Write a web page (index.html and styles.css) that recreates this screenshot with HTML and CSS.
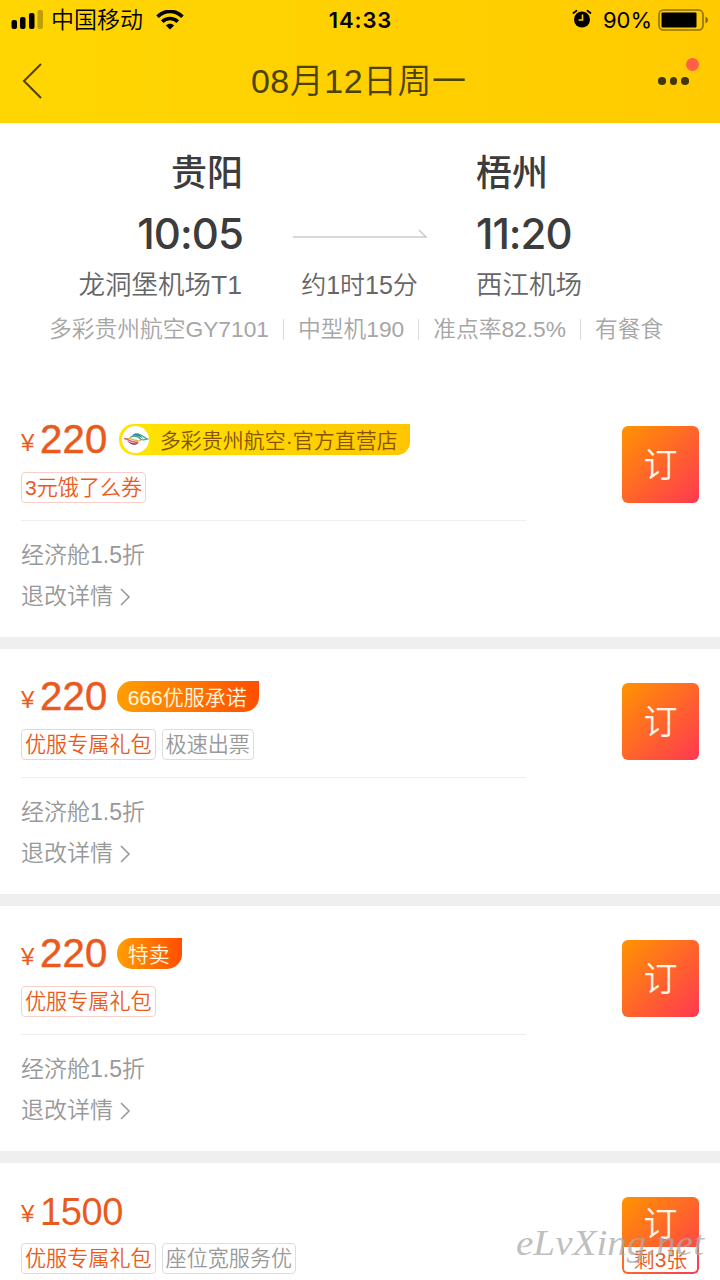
FILE: index.html
```html
<!DOCTYPE html>
<html lang="zh-CN">
<head>
  <meta charset="UTF-8">
  <meta name="viewport" content="width=device-width, initial-scale=1.0">
  <title>08月12日周一</title>
  <link rel="stylesheet" href="styles.css">
</head>
<body>
  <div class="page">
    <header class="header">
      <div class="status-bar">
        <div class="status-left">
          <svg class="signal" width="32" height="20" viewBox="0 0 32 20">
            <rect x="0.500" y="10" width="5.500" height="9" rx="2"/>
            <rect x="9" y="7" width="5.500" height="12" rx="2"/>
            <rect x="18" y="3" width="5.500" height="16" rx="2"/>
            <rect x="26.500" y="0" width="5.500" height="19" rx="2" opacity=".25"/>
          </svg>
          <span class="carrier">中国移动</span>
          <svg class="wifi" width="28" height="20" viewBox="0 0 28 20" fill="none" stroke="#000" stroke-width="3.6">
            <path d="M1.6 6.8C8.5-.4 19.500-.4 26.400 6.800"/>
            <path d="M6.200 11.600C10.500 7.400 17.500 7.400 21.800 11.600"/>
            <path d="M9.900 15.400C12.200 13.200 15.800 13.200 18.100 15.400L14 19.400Z" fill="#000" stroke="none"/>
          </svg>
        </div>
        <span class="clock">14:33</span>
        <div class="status-right">
          <svg class="alarm" width="20" height="20" viewBox="0 0 20 20">
            <circle cx="10" cy="10.500" r="8"/>
            <path d="M1.500 4 4.500 1.800M18.500 4 15.500 1.800" stroke="#000" stroke-width="1.800" stroke-linecap="round"/>
            <path d="M10.500 5.500V11H6.500" fill="none" stroke="#ffce00" stroke-width="1.600"/>
          </svg>
          <span class="percent">90%</span>
          <svg class="battery" width="52" height="22" viewBox="0 0 52 22">
            <rect x="1" y="1" width="44" height="20" rx="4.500" fill="none" stroke="#000" stroke-opacity=".45" stroke-width="1.600"/>
            <rect x="3.500" y="3.500" width="35" height="15" rx="1"/>
            <path d="M47.500 7.500Q50 8.500 50 11T47.500 14.500Z" opacity=".5"/>
          </svg>
        </div>
      </div>
      <div class="nav">
        <svg class="back" width="22" height="38" viewBox="0 0 22 38">
          <path d="M20 2 3 19 20 36" fill="none" stroke="#4c4300" stroke-width="2"/>
        </svg>
        <h1>08月12日周一</h1>
        <div class="more">
          <i></i><i></i><i></i>
          <span class="dot"></span>
        </div>
      </div>
    </header>

    <section class="flight">
      <div class="route">
        <div class="from">
          <div class="city">贵阳</div>
          <div class="time">10:05</div>
          <div class="airport">龙洞堡机场T1</div>
        </div>
        <div class="middle">
          <svg width="136" height="12" viewBox="0 0 136 12">
            <path d="M1 9H134L127 2" fill="none" stroke="#ccc" stroke-width="1.500"/>
          </svg>
          <div class="duration">约1时15分</div>
        </div>
        <div class="to">
          <div class="city">梧州</div>
          <div class="time time-to">11:20</div>
          <div class="airport">西江机场</div>
        </div>
      </div>
      <div class="info">
        <span>多彩贵州航空GY7101</span>
        <span>中型机190</span>
        <span>准点率82.5%</span>
        <span>有餐食</span>
      </div>
    </section>

    <main class="list">
      <article class="card">
        <div class="detail">
          <div class="price-row">
            <span class="yen">¥</span><span class="price">220</span>
            <span class="badge badge-shop">
              <svg width="27" height="27" viewBox="0 0 27 27">
                <circle cx="13.500" cy="13.500" r="13.500" fill="#fff"/>
                <path d="M10 10C13 4.500 19 8 21 13C17 9 14 9.500 10 10Z" fill="#2d8fae"/>
                <path d="M8 11.500C13 8.500 17 11 19 13.500C22 14.500 24 13.500 25.500 13C22 12 20 8.500 16 7.800" fill="none" stroke="#3fa58b" stroke-width="1.300"/>
                <path d="M5 12.500C10 12 13 16 19 14.500" fill="none" stroke="#e3ad55" stroke-width="1.200"/>
                <path d="M2 12.500C7 13 10 17.500 16 16" fill="none" stroke="#dd605d" stroke-width="1.500"/>
                <path d="M5 14.500C9 17 13 18.500 17 16C14 21 8 19 5 14.500Z" fill="#874978"/>
              </svg>
              <span class="badge-text">多彩贵州航空·官方直营店</span>
            </span>
          </div>
          <div class="tags"><span class="tag hot">3元饿了么券</span></div>
          <div class="cabin">经济舱1.5折</div>
          <div class="rule">退改详情
            <svg width="12" height="18" viewBox="0 0 12 18"><path d="M2 1 10 9 2 17" fill="none" stroke="#999" stroke-width="1.600"/></svg>
          </div>
        </div>
        <button class="book">订</button>
      </article>

      <article class="card">
        <div class="detail">
          <div class="price-row">
            <span class="yen">¥</span><span class="price">220</span>
            <span class="badge"><span class="badge-text">666优服承诺</span></span>
          </div>
          <div class="tags"><span class="tag hot">优服专属礼包</span><span class="tag">极速出票</span></div>
          <div class="cabin">经济舱1.5折</div>
          <div class="rule">退改详情
            <svg width="12" height="18" viewBox="0 0 12 18"><path d="M2 1 10 9 2 17" fill="none" stroke="#999" stroke-width="1.600"/></svg>
          </div>
        </div>
        <button class="book">订</button>
      </article>

      <article class="card">
        <div class="detail">
          <div class="price-row">
            <span class="yen">¥</span><span class="price">220</span>
            <span class="badge"><span class="badge-text">特卖</span></span>
          </div>
          <div class="tags"><span class="tag hot">优服专属礼包</span></div>
          <div class="cabin">经济舱1.5折</div>
          <div class="rule">退改详情
            <svg width="12" height="18" viewBox="0 0 12 18"><path d="M2 1 10 9 2 17" fill="none" stroke="#999" stroke-width="1.600"/></svg>
          </div>
        </div>
        <button class="book">订</button>
      </article>

      <article class="card">
        <div class="detail">
          <div class="price-row">
            <span class="yen">¥</span><span class="price price-regular">1500</span>
          </div>
          <div class="tags"><span class="tag hot">优服专属礼包</span><span class="tag">座位宽服务优</span></div>
        </div>
        <button class="book book-left">订<span class="left">剩3张</span></button>
      </article>
    </main>

    <svg class="watermark" width="200" height="56" viewBox="0 0 200 56">
      <text x="2" y="34" textLength="188" lengthAdjust="spacingAndGlyphs">eLvXing.net</text>
    </svg>
  </div>
</body>
</html>
```
FILE: styles.css
```css
* {
  box-sizing: border-box;
}

body {
  margin: 0;
  background: #fff;
  font-family: "Liberation Sans", "Noto Sans CJK SC", sans-serif;
  font-weight: 350;
}

.page {
  position: relative;
  width: 720px;
  height: 1280px;
  overflow: hidden;
}

/* Header */
.header {
  height: 123px;
  background: linear-gradient(90deg, #ffd602, #ffcb00);
}

.status-bar {
  display: grid;
  grid-template-columns: 1fr auto 1fr;
  align-items: center;
  height: 40px;
  padding: 0 10px 0 11px;
  color: #000;
}

.status-left,
.status-right {
  display: flex;
  align-items: center;
}

.status-right {
  justify-content: flex-end;
}

.alarm {
  margin-top: -2px;
}

.carrier {
  margin: 0 13px 0 8px;
  font-size: 23px;
  line-height: 40px;
}

.clock {
  font-family: Inter, sans-serif;
  font-size: 22px;
  font-weight: 600;
  letter-spacing: 0.9px;
}

.percent {
  margin: 0 6px 0 11px;
  font-family: Inter, sans-serif;
  font-size: 22px;
  font-weight: 400;
}

.nav {
  display: flex;
  justify-content: space-between;
  align-items: center;
  height: 82px;
  padding: 0 31px 0 21px;
}

.nav h1 {
  margin: -5px 0 0 16px;
  color: #4c4300;
  font-size: 34px;
  font-weight: 350;
  letter-spacing: 0.5px;
}

.more {
  position: relative;
  display: flex;
  gap: 4px;
}

.more i {
  width: 7.500px;
  height: 7.500px;
  border-radius: 50%;
  background: #40380a;
}

.dot {
  position: absolute;
  right: -10px;
  top: -19px;
  width: 13px;
  height: 13px;
  border-radius: 50%;
  background: #ff5f42;
}

/* Flight summary */
.flight {
  height: 269px;
  padding-top: 28px;
}

.route {
  display: grid;
  grid-template-columns: 243px 233px 1fr;
  height: 155px;
}

.from {
  text-align: right;
}

.city {
  height: 46px;
  color: #3c3c3c;
  font-size: 36px;
  line-height: 46px;
  font-weight: 500;
}

.time {
  height: 67px;
  color: #3c3c3c;
  font-family: Inter, sans-serif;
  font-size: 42px;
  line-height: 73px;
  font-weight: 500;
  letter-spacing: -0.9px;
}

.time-to {
  letter-spacing: -1px;
}

.airport,
.duration {
  color: #666;
  font-size: 26.500px;
  line-height: 42px;
}

.from .airport {
  padding-right: 1px;
}

.middle {
  display: flex;
  flex-direction: column;
  align-items: center;
  padding-top: 77px;
}

.duration {
  margin-top: 24px;
  font-size: 25px;
}

.info {
  display: flex;
  padding-left: 49px;
  height: 46px;
  align-items: center;
  color: #a6a6a6;
  font-size: 22.750px;
  line-height: 1;
  white-space: nowrap;
}

.info span + span {
  margin-left: 14px;
  padding-left: 15px;
  background: linear-gradient(#ddd, #ddd) left center / 1px 21px no-repeat;
}

/* Fare cards */
.card {
  display: flex;
  justify-content: space-between;
  height: 257px;
  padding: 32px 21px 0;
  border-bottom: 12px solid #efefef;
}

.detail {
  width: 505px;
}

.price-row {
  display: flex;
  height: 31px;
}

.yen,
.price {
  color: #ea5a1c;
  line-height: 31px;
}

.yen {
  width: 19px;
  font-size: 24px;
  line-height: 38px;
}

.price {
  margin-right: 9px;
  font-size: 40px;
  letter-spacing: 0.3px;
  -webkit-text-stroke: 0.5px #ea5a1c;
}

.price-regular {
  -webkit-text-stroke: 0;
  font-size: 38px;
  line-height: 34px;
  letter-spacing: -0.4px;
}

.badge {
  display: flex;
  align-items: center;
  height: 31px;
  padding: 0 12px 0 11px;
  border-radius: 15px 0 15px 15px;
  background: linear-gradient(90deg, #ff9f00, #ff4e00);
  color: #fff8e0;
  font-size: 21px;
  white-space: nowrap;
}

.badge-text {
  padding-bottom: 2px;
}

.badge-shop {
  gap: 11px;
  margin-left: 2px;
  padding: 0 12px 0 3px;
  border-radius: 15px 0 13px 15px;
  background: linear-gradient(90deg, #ffe500, #ffc600);
  color: #855300;
}

.tags {
  display: flex;
  gap: 6px;
  height: 66px;
  padding-top: 17px;
  border-bottom: 1px solid #eee;
}

.card:last-child .tags {
  border-bottom: 0;
}

.tag {
  height: 31px;
  padding: 0 3px;
  border: 1px solid #ddd;
  border-radius: 4px;
  color: #999;
  font-size: 21.100px;
  line-height: 29px;
  white-space: nowrap;
}

.hot {
  border-color: #f9cfc8;
  color: #ea5a1c;
}

.cabin,
.rule {
  color: #999;
  font-size: 23px;
  line-height: 41px;
}

.cabin {
  margin-top: 14px;
}

.rule {
  display: flex;
  align-items: center;
  gap: 6px;
}

.book {
  display: flex;
  flex-direction: column;
  align-items: center;
  width: 77px;
  height: 77px;
  margin-top: 2px;
  padding: 0;
  border: 0;
  border-radius: 6px;
  background: linear-gradient(135deg, #ff9400, #ff3852);
  color: #fff5e8;
  font: 350 34px/74px "Noto Sans CJK SC", sans-serif;
}

.book-left {
  padding: 0 2px 2px;
  line-height: 50px;
}

.left {
  width: 73px;
  height: 25px;
  border-radius: 0 0 4px 4px;
  background: #fff;
  color: #ea5a1c;
  font: 350 21px/25px "Liberation Sans", "Noto Sans CJK SC", sans-serif;
}

.watermark {
  position: absolute;
  left: 514px;
  top: 1221px;
}

.watermark text {
  fill: #aaa;
  fill-opacity: 0.75;
  font: italic 36px "Liberation Serif", serif;
}
```
